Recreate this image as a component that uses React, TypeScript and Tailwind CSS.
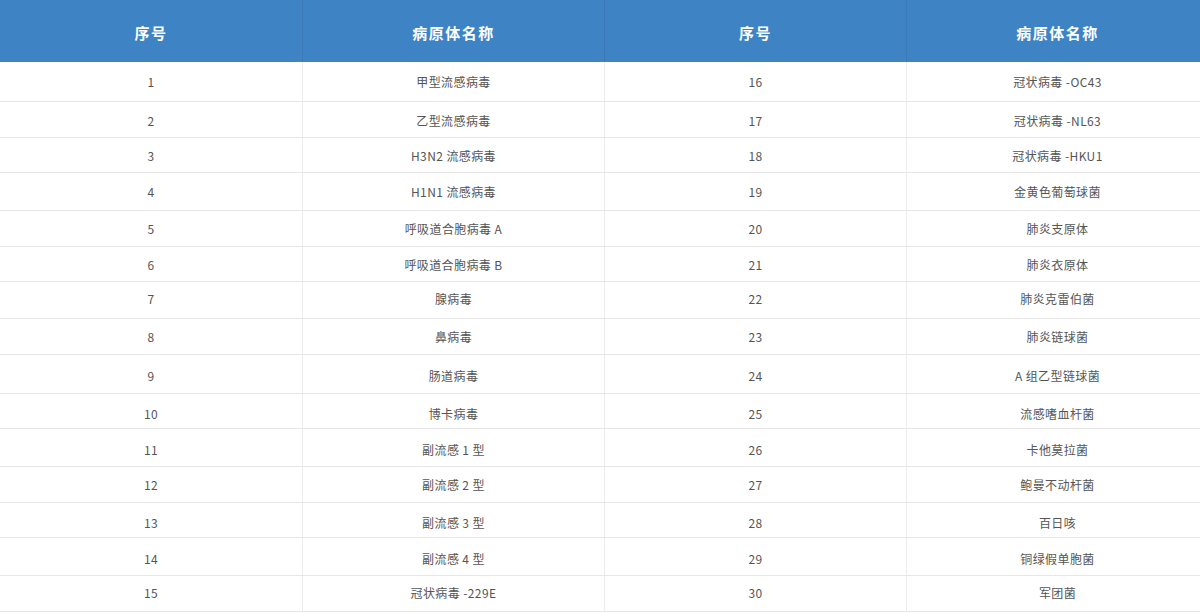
const rows: [string, string, string, string, string][] = [
  ["1", "甲型流感病毒", "16", "冠状病毒 -OC43", "h-[39px] pt-[1px]"],
  ["2", "乙型流感病毒", "17", "冠状病毒 -NL63", "h-[35px] pt-[2px]"],
  ["3", "H3N2 流感病毒", "18", "冠状病毒 -HKU1", "h-[34px] pt-[2px]"],
  ["4", "H1N1 流感病毒", "19", "金黄色葡萄球菌", "h-[37px]"],
  ["5", "呼吸道合胞病毒 A", "20", "肺炎支原体", "h-[35px]"],
  ["6", "呼吸道合胞病毒 B", "21", "肺炎衣原体", "h-[34px] pt-[1px]"],
  ["7", "腺病毒", "22", "肺炎克雷伯菌", "h-[36px] pb-[3px]"],
  ["8", "鼻病毒", "23", "肺炎链球菌", "h-[35px]"],
  ["9", "肠道病毒", "24", "A 组乙型链球菌", "h-[38px] pt-[3px]"],
  ["10", "博卡病毒", "25", "流感嗜血杆菌", "h-[34px] pt-[5px]"],
  ["11", "副流感 1 型", "26", "卡他莫拉菌", "h-[37px] pt-[4px]"],
  ["12", "副流感 2 型", "27", "鲍曼不动杆菌", "h-[35px]"],
  ["13", "副流感 3 型", "28", "百日咳", "h-[34px] pt-[5px]"],
  ["14", "副流感 4 型", "29", "铜绿假单胞菌", "h-[37px] pt-[4px]"],
  ["15", "冠状病毒 -229E", "30", "军团菌", "h-[35px] pb-[2px]"],
];

const font = "font-['Noto_Sans_CJK_SC','Noto_Sans',sans-serif]";

export default function App() {
  return (
    <div className={`w-[1200px] overflow-hidden bg-white ${font}`}>
      <div className="w-[1208px]">
        <div className="grid h-[62px] grid-cols-4 bg-[#3e84c5] text-[15px] font-bold tracking-[1.5px] text-white">
          {["序号", "病原体名称", "序号", "病原体名称"].map((h, i) => (
            <div
              key={i}
              className="flex items-center justify-center border-l border-[#3a7ab6] pt-[4px] first:border-l-0"
            >
              {h}
            </div>
          ))}
        </div>
        {rows.map(([a, b, c, d, cls]) => (
          <div
            key={a}
            className="grid grid-cols-4 border-b border-[#e6e6e6] text-[12px] tracking-[0.4px] text-[#555]"
          >
            {[a, b, c, d].map((t, i) => (
              <div
                key={i}
                className={`flex items-center justify-center border-l border-[#ececec] first:border-l-0 ${cls}`}
              >
                {t}
              </div>
            ))}
          </div>
        ))}
      </div>
    </div>
  );
}
